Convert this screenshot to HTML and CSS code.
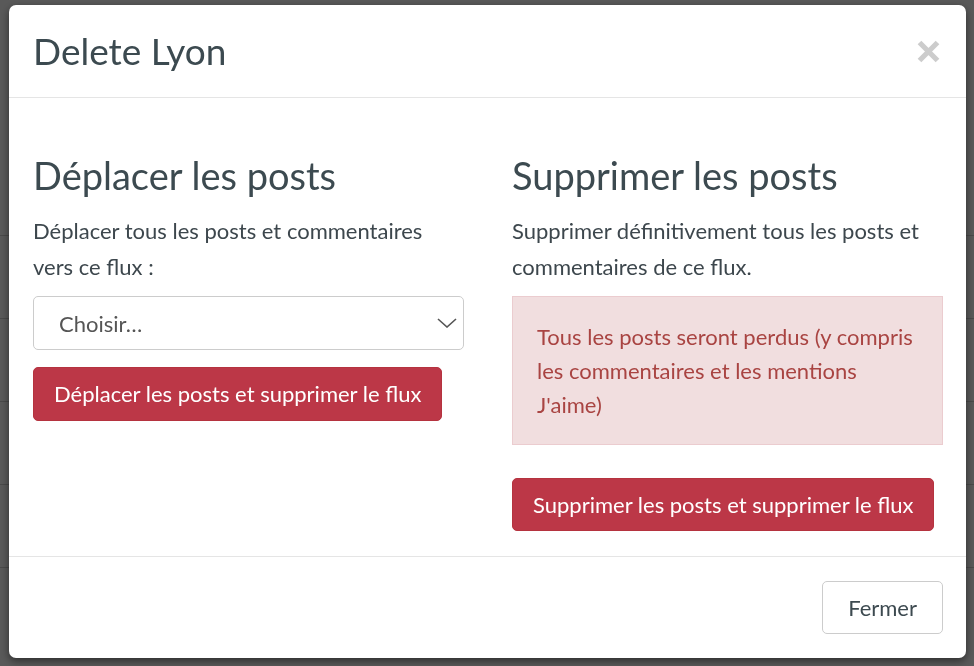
FILE: index.html
```html
<!DOCTYPE html>
<html lang="fr">
<head>
<meta charset="utf-8">
<title>Delete Lyon</title>
<link rel="stylesheet" href="styles.css">
</head>
<body>
<div class="page">
  <div class="page-top"></div>
  <div class="page-row"></div>
  <div class="page-row"></div>
  <div class="page-row"></div>
  <div class="page-row"></div>
  <div class="page-row"></div>
</div>
<div class="overlay">
  <div class="modal" role="dialog" aria-labelledby="modal-title">
    <header class="modal-header">
      <h1 class="modal-title" id="modal-title">Delete Lyon</h1>
      <button class="close" type="button" aria-label="Fermer">
        <svg width="23" height="23" viewBox="0 0 23 23" aria-hidden="true"><path d="M2.5 2.5L20.5 20.5M20.5 2.5L2.5 20.5" stroke="#cccccc" stroke-width="5.2" fill="none"/></svg>
      </button>
    </header>
    <div class="modal-body">
      <section class="col">
        <h2 class="col-title">Déplacer les posts</h2>
        <p class="col-text">Déplacer tous les posts et commentaires vers ce flux :</p>
        <div class="select-wrap">
          <select class="select"><option>Choisir…</option></select>
          <svg class="chevron" width="20" height="10" viewBox="0 0 20 10" aria-hidden="true"><path d="M1 1L10 9L19 1" stroke="#555" stroke-width="1.6" fill="none"/></svg>
        </div>
        <button class="btn btn-danger btn-move" type="button">Déplacer les posts et supprimer le flux</button>
      </section>
      <section class="col">
        <h2 class="col-title">Supprimer les posts</h2>
        <p class="col-text">Supprimer définitivement tous les posts et commentaires de ce flux.</p>
        <div class="alert">Tous les posts seront perdus (y compris les commentaires et les mentions J'aime)</div>
        <button class="btn btn-danger btn-delete" type="button">Supprimer les posts et supprimer le flux</button>
      </section>
    </div>
    <footer class="modal-footer">
      <button class="btn btn-default" type="button">Fermer</button>
    </footer>
  </div>
</div>
</body>
</html>
```

FILE: styles.css
```css
* { box-sizing: border-box; }

html, body {
  margin: 0;
  height: 100%;
}

body {
  background: #ffffff;
  font-family: Lato, "Liberation Sans", sans-serif;
  color: #3d4a50;
  overflow: hidden;
}

/* page underneath the modal */
.page {
  height: 100%;
  overflow: hidden;
}

.page-top {
  height: 235px;
}

.page-row {
  height: 83px;
  border-top: 1px solid #d2d2d2;
}

/* overlay */
.overlay {
  position: fixed;
  inset: 0;
  background: rgba(0, 0, 0, 0.65);
  display: flex;
  align-items: flex-start;
  padding: 5px 8px 8px 9px;
}

.modal {
  width: 957px;
  height: 653px;
  background: #ffffff;
  border-radius: 7px;
  box-shadow: 0 3px 9px rgba(0, 0, 0, 0.5);
  display: flex;
  flex-direction: column;
}

.modal-header {
  height: 93px;
  padding: 0 26px 0 24px;
  display: flex;
  align-items: center;
  justify-content: space-between;
  border-bottom: 1px solid #e5e5e5;
}

.modal-title {
  margin: 0;
  font-size: 37px;
  font-weight: 400;
  line-height: 44px;
  color: #3c4a50;
}

.close {
  border: 0;
  background: none;
  padding: 0;
  width: 23px;
  height: 23px;
  display: flex;
  cursor: pointer;
}

.modal-body {
  flex: 1;
  padding: 55px 23px 0 24px;
  display: grid;
  grid-template-columns: 431px 431px;
  column-gap: 48px;
  align-items: start;
}

.col {
  display: flex;
  flex-direction: column;
  align-items: flex-start;
}

.col-title {
  margin: 0;
  font-size: 38px;
  line-height: 44px;
  font-weight: 400;
  color: #3c4a50;
}

.col-text {
  margin: 16px 0 0 0;
  font-size: 22px;
  line-height: 36px;
  color: #3d474d;
}

.select-wrap {
  position: relative;
  width: 100%;
  margin-top: 11px;
}

.select {
  display: block;
  width: 100%;
  height: 54px;
  appearance: none;
  -webkit-appearance: none;
  border: 1px solid #cccccc;
  border-radius: 5px;
  background: #ffffff;
  padding: 0 40px 0 25px;
  font-family: inherit;
  font-size: 22px;
  color: #555555;
}

.chevron {
  position: absolute;
  right: 7px;
  top: 22px;
  pointer-events: none;
}

.btn {
  font-family: inherit;
  font-size: 22px;
  line-height: 1;
  border-radius: 5px;
  cursor: pointer;
}

.btn-danger {
  background: #bc3747;
  border: 1px solid #b5333f;
  color: #ffffff;
  padding: 0 20px;
}

.btn-move {
  margin-top: 17px;
  height: 54px;
}

.alert {
  align-self: stretch;
  margin-top: 11px;
  padding: 23px 22px 22px 24px;
  background: #f1dedf;
  border: 1px solid #ebcccf;
  color: #a94442;
  font-size: 22px;
  line-height: 34px;
}

.btn-delete {
  margin-top: 33px;
  height: 53px;
}

.modal-footer {
  border-top: 1px solid #e5e5e5;
  padding: 24px 23px 24px 24px;
  display: flex;
  justify-content: flex-end;
}

.btn-default {
  height: 53px;
  padding: 0 25px;
  background: #ffffff;
  border: 1px solid #cccccc;
  color: #3d4a50;
}
```
